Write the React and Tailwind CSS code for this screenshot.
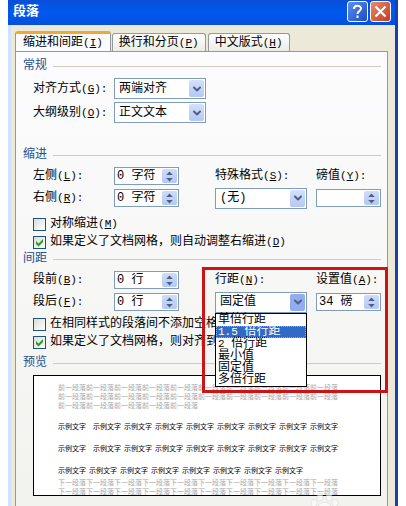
import { useState } from "react";
import { ChevronDown } from "lucide-react";

const spacingOptions = [
  { num: "", text: "单倍行距" },
  { num: "1.5 ", text: "倍行距" },
  { num: "2 ", text: "倍行距" },
  { num: "", text: "最小值" },
  { num: "", text: "固定值" },
  { num: "", text: "多倍行距" },
];

const Latin = ({ children }) => (
  <span className="font-['Liberation_Mono',monospace] text-[11px] whitespace-pre">{children}</span>
);

const Caption = ({ text, hotkey, colon }) => (
  <>
    {text}
    <Latin>
      (<u className="underline-offset-1">{hotkey}</u>){colon && ":"}
    </Latin>
  </>
);

const Label = ({ htmlFor, text, hotkey, className }) => (
  <label htmlFor={htmlFor} className={className}>
    <Caption text={text} hotkey={hotkey} colon />
  </label>
);

const Section = ({ title, children }) => (
  <section>
    <div className="flex h-4 items-center gap-1.5">
      <h2 className="text-[#1f4f8f]">{title}</h2>
      <div className="h-px flex-1 bg-[#cfccbf]" />
    </div>
    {children}
  </section>
);

const Select = ({ id, value, options, active }) => (
  <div className="relative h-[21px] w-[92px]">
    <select
      id={id}
      defaultValue={value}
      className="block h-full w-full appearance-none border border-[#7f9db9] bg-white pl-1 leading-4 outline-none"
    >
      {options.map((o) => (
        <option key={o}>{o}</option>
      ))}
    </select>
    <span
      className={`pointer-events-none absolute inset-y-0.5 right-0.5 flex w-[15px] items-center justify-center rounded-xs ${
        active ? "bg-[#93acf0]" : "bg-linear-to-b from-[#d5e1fc] to-[#b4c8f3]"
      }`}
    >
      <ChevronDown size={12} strokeWidth={4} className="text-[#4d6185]" />
    </span>
  </div>
);

const Spinner = ({ id, value }) => {
  const [text, setText] = useState(value);
  return (
    <div className="flex h-[18px] w-[65px] border border-[#7f9db9] bg-white p-px">
      <input
        id={id}
        value={text}
        onChange={(e) => setText(e.target.value)}
        className="w-0 flex-1 pl-px leading-4 outline-none"
      />
      <span className="flex w-[15px] items-center justify-center rounded-xs bg-linear-to-b from-[#cfdcfb] to-[#b4c8f3]">
        <svg width="7" height="11" viewBox="0 0 7 11" fill="#4d6185">
          <path d="M3.5 0.5L6.8 4H0.2zM3.5 10.5L6.8 7H0.2z" />
        </svg>
      </span>
    </div>
  );
};

const Check = ({ text, hotkey, checked }) => (
  <label className="flex h-[18px] items-center gap-1 whitespace-nowrap">
    <span className="relative flex h-[13px] w-[13px]">
      <input
        type="checkbox"
        defaultChecked={checked}
        className="peer h-full w-full appearance-none border border-[#1c5180] bg-linear-to-br from-[#dcdcd7] to-white"
      />
      <svg
        className="pointer-events-none absolute inset-0 hidden peer-checked:block"
        width="13"
        height="13"
        viewBox="0 0 13 13"
      >
        <path d="M3 5v3l2.5 2.5L10 6V3L5.5 7.5z" fill="#21a121" />
      </svg>
    </span>
    <span>{hotkey ? <Caption text={text} hotkey={hotkey} /> : text}</span>
  </label>
);

const TitleBar = () => (
  <header className="flex h-[25px] shrink-0 items-start justify-between bg-linear-to-b from-[#0a4fd8] via-[#0058ee] to-[#0350dc] pr-1 pl-[5px]">
    <h1 className="pt-[3px] text-[13px] leading-[18px] font-bold text-white">段落</h1>
    <div className="flex gap-0.5 pt-px">
      <button
        aria-label="帮助"
        className="flex h-[21px] w-[21px] items-center justify-center rounded-[3px] border border-white bg-linear-to-br from-[#5f8ff0] to-[#1c49c4]"
      >
        <svg width="13" height="15" viewBox="0 0 13 15" fill="none" stroke="white" strokeWidth="2">
          <path d="M3 5C3 0.8 10 0.8 10 4.6C10 7 6.5 7 6.5 10M6.5 11.5V14" />
        </svg>
      </button>
      <button
        aria-label="关闭"
        className="flex h-[21px] w-[21px] items-center justify-center rounded-[3px] border border-white bg-linear-to-br from-[#e88a6c] to-[#c4371a]"
      >
        <svg width="13" height="13" viewBox="0 0 13 13" stroke="white" strokeWidth="2.2">
          <path d="M1.5 1.5l10 10M11.5 1.5l-10 10" />
        </svg>
      </button>
    </div>
  </header>
);

const Tabs = () => (
  <nav className="flex items-end gap-px" role="tablist">
    <button
      role="tab"
      aria-selected="true"
      className="h-5 rounded-t-[3px] border-x border-t-3 border-x-[#919b9c] border-t-[#f0a838] bg-[#fcfcfe] px-[7px] leading-4"
    >
      <Caption text="缩进和间距" hotkey="I" />
    </button>
    <button
      role="tab"
      className="h-[18px] rounded-t-[3px] border border-b-0 border-[#919b9c] bg-linear-to-b from-white to-[#ececE5] px-[6px] leading-4"
    >
      <Caption text="换行和分页" hotkey="P" />
    </button>
    <button
      role="tab"
      className="ml-px h-[18px] rounded-t-[3px] border border-b-0 border-[#919b9c] bg-linear-to-b from-white to-[#ececE5] px-[6px] leading-4"
    >
      <Caption text="中文版式" hotkey="H" />
    </button>
  </nav>
);

const LineSpacingList = () => (
  <ul role="listbox" aria-label="行距" className="absolute top-full left-0 z-10 w-full border border-black bg-white">
    {spacingOptions.map(({ num, text }, i) => (
      <li
        key={num + text}
        role="option"
        aria-selected={i === 1}
        className={`flex h-3 items-center pl-0.5 leading-3 whitespace-nowrap ${
          i === 1 ? "bg-[#316ac5] text-white outline-1 -outline-offset-1 outline-dotted outline-[#d8a060]" : ""
        }`}
      >
        {num && <Latin>{num}</Latin>}
        <span>{text}</span>
      </li>
    ))}
  </ul>
);

const Preview = () => (
  <div className="mt-1 ml-[10px] h-[121px] overflow-hidden border border-black bg-white pt-2 pl-6 text-[7px] leading-[9px] whitespace-nowrap">
    <p className="text-[#a8a8a8]">
      {"前一段落".repeat(10)}
      <br />
      {"前一段落".repeat(10)}
      <br />
      {"前一段落".repeat(5)}
    </p>
    <div className="flex flex-col gap-[13px] pt-3 pb-[3px]">
      {[9, 9, 8].map((count, row) => (
        <p key={row} className="flex gap-[3px]">
          {Array.from({ length: count }, (_, i) => (
            <span key={i} className={count === 9 && i === 0 ? "pr-1" : ""}>
              示例文字
            </span>
          ))}
        </p>
      ))}
    </div>
    <p className="text-[#a8a8a8]">
      {"下一段落".repeat(10)}
      <br />
      {"下一段落".repeat(10)}
    </p>
  </div>
);

const Watermark = () => (
  <svg
    className="pointer-events-none absolute right-[42px] bottom-0 opacity-60"
    width="40"
    height="13"
    viewBox="0 0 40 13"
    fill="white"
    stroke="#d8d8d4"
    strokeWidth="0.8"
  >
    <ellipse cx="15" cy="4" rx="3" ry="4" />
    <ellipse cx="24" cy="4" rx="3" ry="4" />
    <ellipse cx="9" cy="10" rx="3" ry="3.5" />
    <ellipse cx="30" cy="10" rx="3" ry="3.5" />
    <path d="M13 14C14 8 25 8 26 14z" />
  </svg>
);

const App = () => {
  return (
    <div className="bg-white pr-2 pl-2 font-['Liberation_Mono','Noto_Sans_CJK_SC',monospace] text-xs leading-4 text-black">
      <div className="flex min-h-screen flex-col border-r-3 border-[#1a3fb0] bg-[#ece9d8]">
        <TitleBar />
        <div className="flex flex-1 flex-col border-l-3 border-[#cfe4fb] pt-[6px] pr-[7px] pl-1">
          <Tabs />
          <main className="relative flex-1 border border-b-0 border-[#919b9c] bg-linear-to-b from-[#fcfcfe] to-[#f2f2ee] pt-[6px] pr-1.5 pb-2.5 pl-[7px]">
            <Section title="常规">
              <div className="grid grid-cols-[81px_92px] items-center gap-y-[3px] pt-1 pl-[10px]">
                <Label htmlFor="align" text="对齐方式" hotkey="G" />
                <Select id="align" value="两端对齐" options={["两端对齐", "左对齐", "居中", "右对齐"]} />
                <Label htmlFor="level" text="大纲级别" hotkey="O" />
                <Select id="level" value="正文文本" options={["正文文本", "1 级", "2 级"]} />
              </div>
            </Section>

            <div className="pt-6">
              <Section title="缩进">
                <div className="flex justify-between pt-0.5 pl-[10px]">
                  <div className="grid auto-rows-[22px] grid-cols-[81px_65px] items-center">
                    <Label htmlFor="left" text="左侧" hotkey="L" />
                    <Spinner id="left" value="0 字符" />
                    <Label htmlFor="right" text="右侧" hotkey="R" />
                    <Spinner id="right" value="0 字符" />
                  </div>
                  <div className="grid auto-rows-[22px] grid-cols-[92px_65px] items-center gap-x-[9px]">
                    <Label htmlFor="special" text="特殊格式" hotkey="S" />
                    <Label htmlFor="by" text="磅值" hotkey="Y" />
                    <Select id="special" value="(无)" options={["(无)", "首行缩进", "悬挂缩进"]} />
                    <Spinner id="by" value="" />
                  </div>
                </div>
                <div className="pt-1.5 pl-[10px]">
                  <Check text="对称缩进" hotkey="M" />
                  <Check text="如果定义了文档网格，则自动调整右缩进" hotkey="D" checked />
                </div>
              </Section>
            </div>

            <Section title="间距">
              <div className="relative flex justify-between pt-0.5 pl-[10px]">
                <div className="grid auto-rows-[22px] grid-cols-[81px_65px] items-center">
                  <Label htmlFor="before" text="段前" hotkey="B" />
                  <Spinner id="before" value="0 行" />
                  <Label htmlFor="after" text="段后" hotkey="F" />
                  <Spinner id="after" value="0 行" />
                </div>
                <div className="grid auto-rows-[22px] grid-cols-[92px_65px] items-center gap-x-[9px]">
                  <Label htmlFor="spacing" text="行距" hotkey="N" />
                  <Label htmlFor="at" text="设置值" hotkey="A" />
                  <div className="relative">
                    <Select id="spacing" value="固定值" options={["固定值", "单倍行距", "最小值", "多倍行距"]} active />
                    <LineSpacingList />
                  </div>
                  <Spinner id="at" value="34 磅" />
                </div>
                <div className="pointer-events-none absolute top-0 -right-[7px] z-20 h-[126px] w-[186px] border-3 border-[#cc1414]" />
              </div>
              <div className="pt-0.5 pb-1 pl-[10px]">
                <Check text="在相同样式的段落间不添加空格" />
                <Check text="如果定义了文档网格，则对齐到网格" checked />
              </div>
            </Section>

            <Section title="预览">
              <Preview />
            </Section>
            <Watermark />
          </main>
        </div>
      </div>
    </div>
  );
};

export default App;
